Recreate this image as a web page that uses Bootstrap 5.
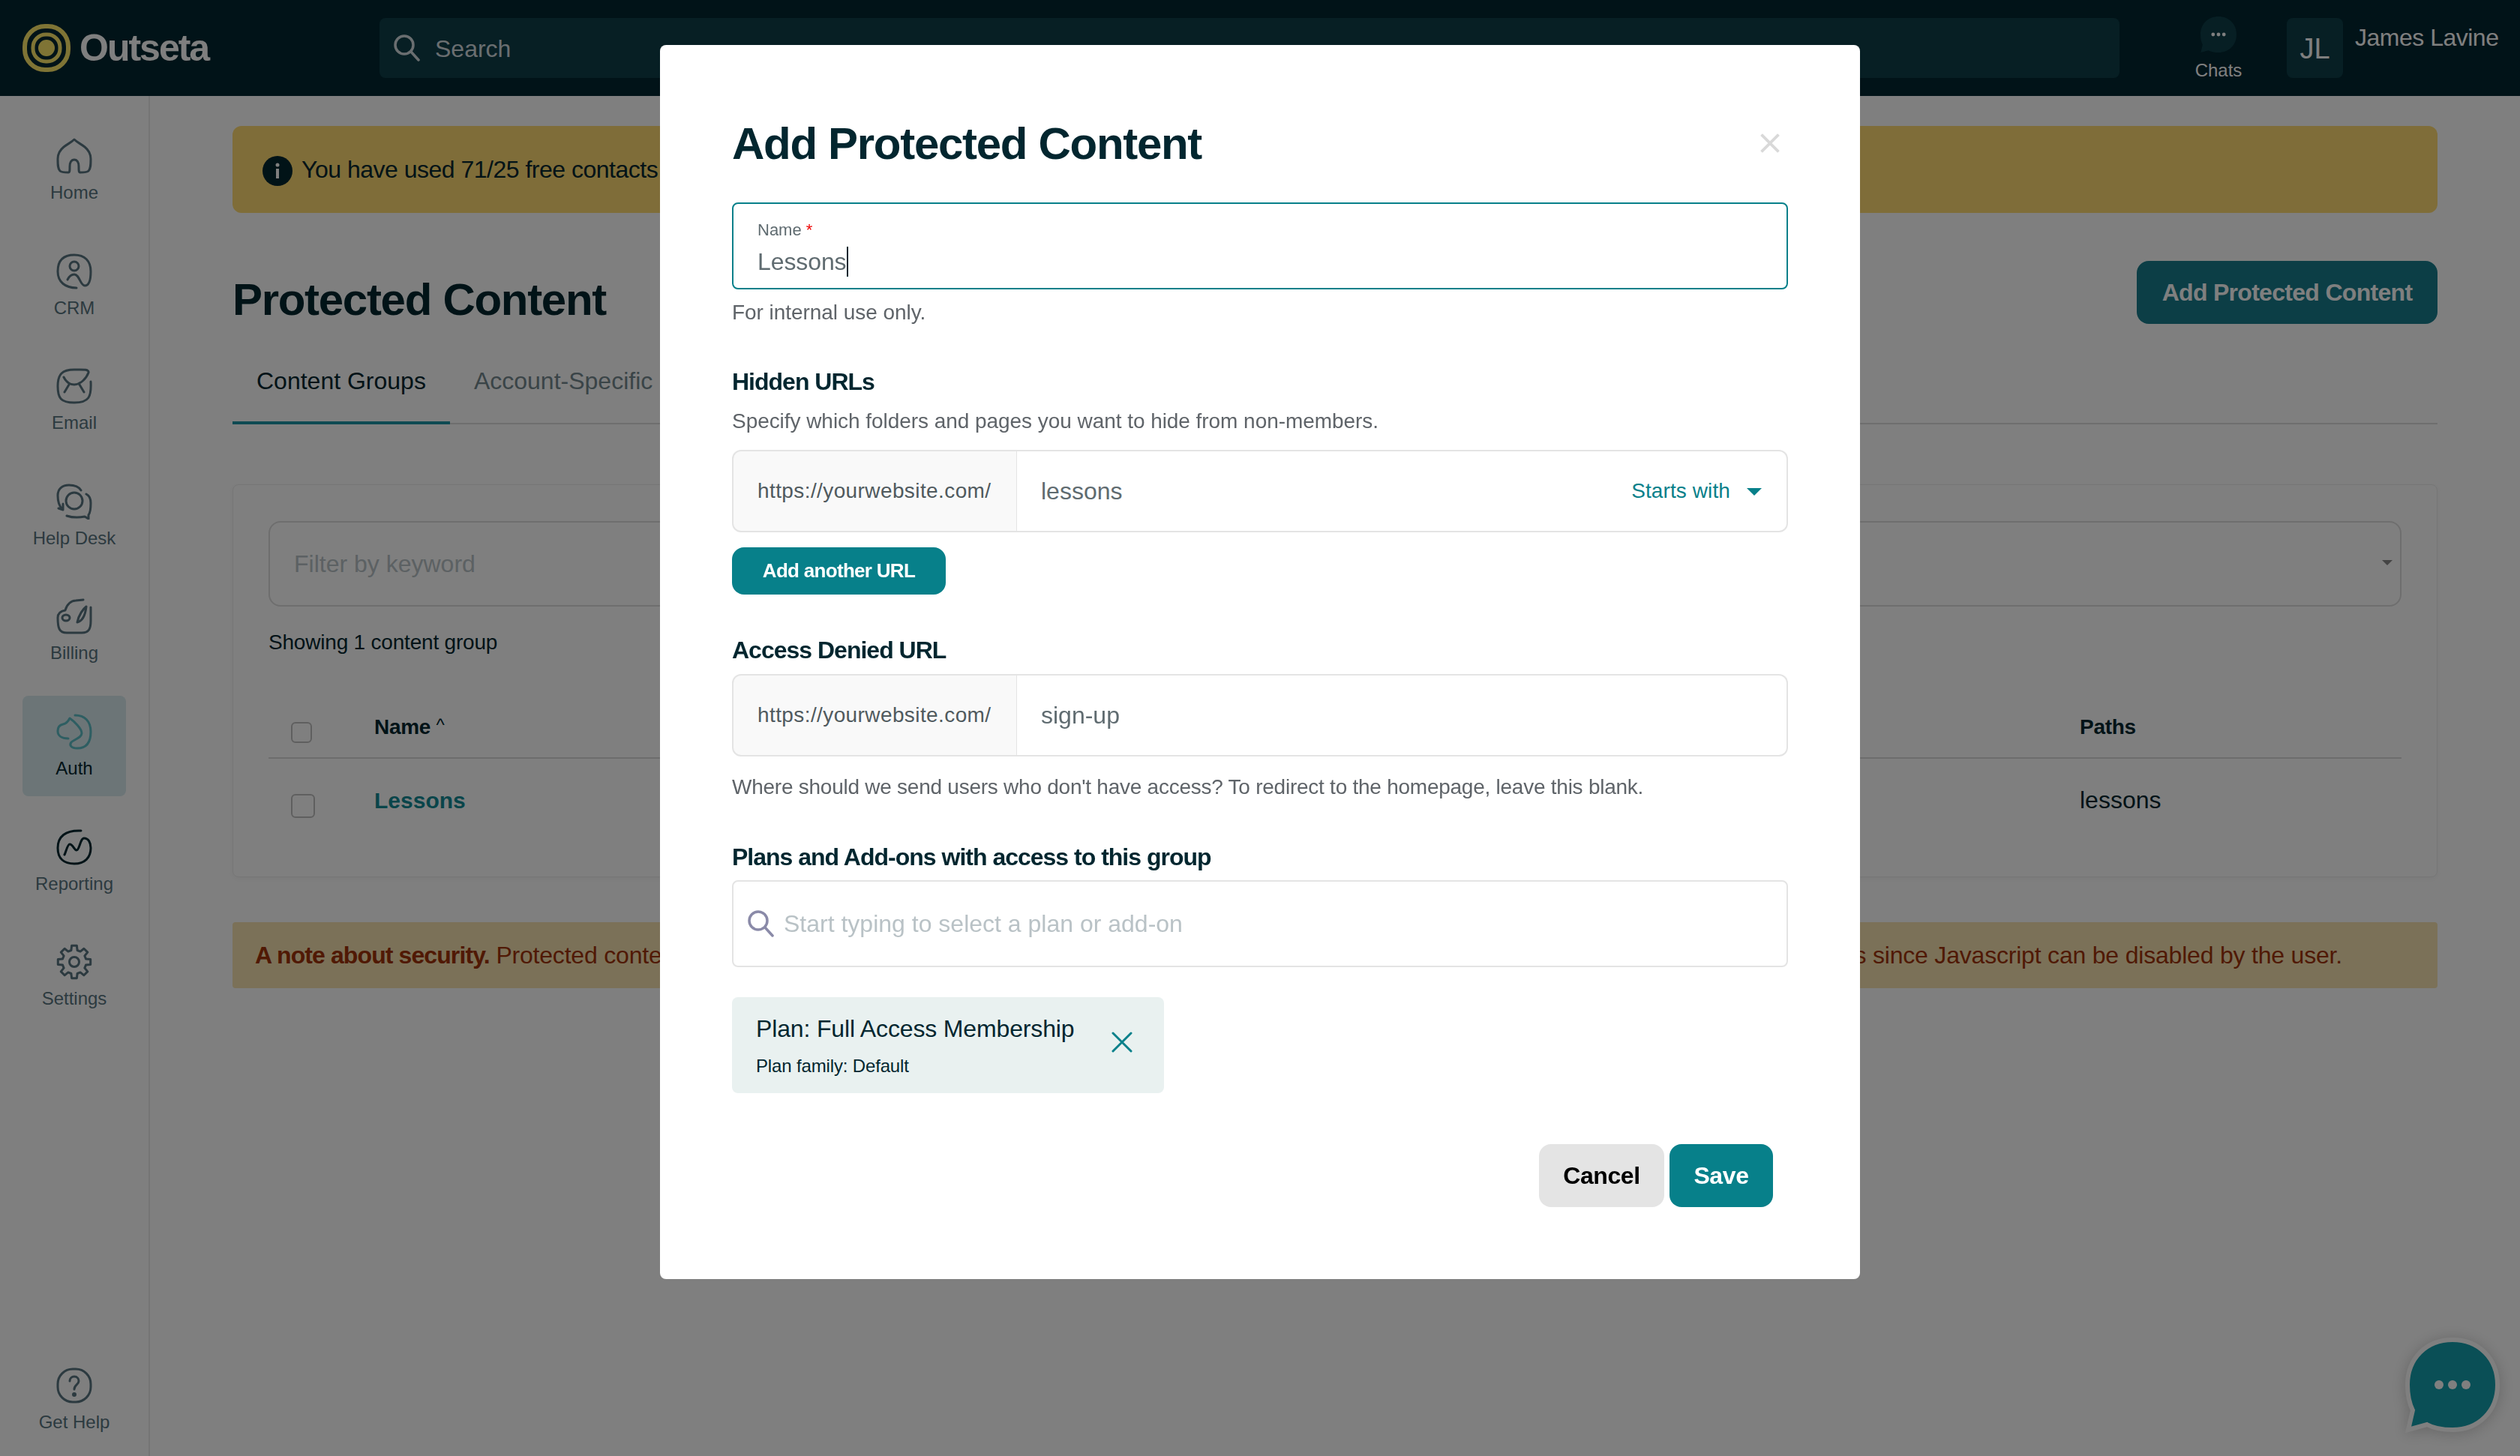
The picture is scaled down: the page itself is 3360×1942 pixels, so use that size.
<!DOCTYPE html>
<html lang="en">
<head>
  <meta charset="UTF-8" />
  <title>Protected Content</title>
  <link href="https://cdn.jsdelivr.net/npm/bootstrap@5.3.0/dist/css/bootstrap.min.css" rel="stylesheet" />
  <style>
    html { font-size: 32px; height: 1942px; overflow: hidden; }
    :root {
      --bs-border-radius: 8px;
      --bs-body-color: #02262f;
      --bs-body-font-family: "Liberation Sans", Arial, sans-serif;
    }
    body { height: 1942px; overflow: hidden; font-family: "Liberation Sans", Arial, sans-serif; color: #02262f; background: #fff; }
    .modal-backdrop.show { opacity: .5; background: #000; }

    /* top bar */
    .top-bar { height: 128px; background: #022630; padding-left: 30px; color: #fff; }
    .brand { width: 476px; font-size: 50px; font-weight: 700; letter-spacing: -2px; }
    .brand svg { width: 64px; height: 64px; margin-right: 12px; }
    .search-box { width: 2320px; height: 80px; background: #0e3e48; border-radius: 8px; padding-left: 18px; color: #d4dde0; }
    .search-box svg { width: 36px; height: 36px; margin-right: 20px; }
    .search-box span { padding-top: 2px; }
    .chats { width: 80px; margin-left: 92px; font-size: 24px; line-height: 28px; padding-top: 2px; }
    .chats svg { width: 48px; height: 48px; display: block; margin-bottom: 10px; }
    .avatar { width: 75px; height: 80px; margin-left: 51px; background: #0e3e48; border-radius: 8px; font-size: 38px; padding-top: 2px; }
    .user-name { margin-left: 16px; margin-top: -28px; white-space: nowrap; letter-spacing: -.5px; }

    /* sidebar */
    .side-nav { width: 200px; height: 1814px; padding: 32px 30px 8px; border-right: 2px solid #ebebeb; flex-shrink: 0; }
    .side-item { display: block; height: 133.6px; margin-bottom: 20px; padding-top: 24px; border-radius: 8px; text-align: center; text-decoration: none; font-size: 24px; line-height: 30px; color: #587480; }
    .side-item:last-child { margin-bottom: 0; }
    .side-item svg { display: block; width: 48px; height: 48px; margin: 0 auto 10px; fill: none; stroke: #587480; stroke-width: 3; stroke-linecap: round; stroke-linejoin: round; }
    .side-item.is-active { background: #d8eaee; color: #02262f; }
    .side-item.is-active svg { stroke: #5cbcc4; }
    .side-item.is-report svg { stroke: #02262f; }

    /* main column */
    .main-col { padding: 40px 110px 0 110px; min-width: 0; }
    .usage-alert { height: 116px; margin: 0; padding: 0 0 0 40px; gap: 12px; border: 0; background: #ffda72; color: #02262f; white-space: nowrap; overflow: hidden; letter-spacing: -.5px; }
    .usage-alert svg { width: 40px; height: 40px; margin-top: 4px; }
    .page-head { height: 84px; margin-top: 64px; }
    .page-title { font-size: 60px; font-weight: 700; line-height: 72px; margin: 20px 0 0; letter-spacing: -1.3px; }
    .btn-head { height: 84px; width: 401px; border-radius: 16px; border: 0; background: #187c8c; color: #fff; font-weight: 700; font-size: 32px; letter-spacing: -.7px; }
    .tabs-row { margin-top: 52px; border-bottom: 2px solid #dcdcdc; }
    .tabs-row .nav-link { padding: 0 32px 30px; line-height: 48px; margin-bottom: -2px; border-bottom: 4px solid transparent; color: #74888f; }
    .tabs-row .nav-link.active { color: #02262f; border-bottom-color: #1c94a4; }

    .groups-card { margin-top: 80px; height: 524px; padding: 48px 47px; border: 1px solid #ededed; box-shadow: 0 2px 8px rgba(0,0,0,.05); }
    .filter-row { height: 114px; }
    .filter-input { flex: 1; border: 2px solid #dcdcdc; border-radius: 16px; padding: 0 32px; }
    .filter-input::placeholder { color: #b8c2c6; }
    .filter-select { width: 1300px; border: 2px solid #dcdcdc; border-radius: 16px; font-size: 25px; text-align: right; padding: 0 10px 0 0; background: #fff; color: #888; }
    .count-line { font-size: 28px; line-height: 42px; margin: 27px 0 51px; letter-spacing: -.2px; }
    .groups-table { table-layout: fixed; margin: 0; --bs-table-bg: transparent; }
    .groups-table th { height: 82px; padding: 0; font-size: 28px; vertical-align: middle; border-bottom: 2px solid #dadada; letter-spacing: -.3px; }
    .groups-table td { height: 110px; padding: 0; vertical-align: middle; border: 0; }
    .groups-table .form-check-input { display: block; margin: 14px 0 0 30px; border: 2px solid #bebebe; border-radius: 6px; }
    .groups-table td .form-check-input { margin-top: 16px; }
    .sort-mark { font-size: 24px; font-weight: 400; vertical-align: 4px; }
    .group-link { color: #128a94; font-size: 30px; font-weight: 700; text-decoration: none; }
    .security-note { height: 88px; margin-top: 60px; padding: 0 127px 0 30px; background: #f6e2b0; color: #a03208; border-radius: 4px; white-space: nowrap; overflow: hidden; letter-spacing: -.2px; }
    .security-note strong { letter-spacing: -.9px; }

    /* floating chat */
    .chat-float { position: fixed; right: 30px; bottom: 35px; width: 120px; height: 120px; z-index: 1000; filter: drop-shadow(0 2px 10px rgba(0,0,0,.2)); overflow: visible; }

    /* modal */
    .modal-dialog.content-modal { max-width: 1600px; width: 1600px; margin: 60px auto 0; }
    .content-modal .modal-content { padding: 96px 96px 96px; border: 0; border-radius: 8px; }
    .content-modal .modal-header { padding: 0; border: 0; }
    .content-modal .modal-title { font-size: 60px; line-height: 72px; font-weight: 700; letter-spacing: -1.3px; }
    .content-modal .btn-close { font-size: 30px; padding: 0; margin: -2px 9px 0 auto; opacity: .15; }
    .name-field { height: 116px; margin-top: 42px; padding: 22px 32px 0; border: 2px solid #07808a; border-radius: 8px; }
    .name-label { display: block; font-size: 22px; line-height: 26px; color: #5f6b70; }
    .name-label span { color: #e00; }
    .name-value { display: inline-block; margin-top: 9px; line-height: 40px; color: #5f6b70; border-right: 2px solid #02262f; letter-spacing: -.1px; }
    .hint { font-size: 28px; line-height: 36px; color: #5f6469; letter-spacing: -.05px; }
    .hint-tight { letter-spacing: -.25px; }
    .sub-head { font-size: 32px; line-height: 40px; font-weight: 700; letter-spacing: -1px; }
    .url-group > * { height: 110px; }
    .url-group .input-group-text { width: 381px; padding: 0 32px; background: #f9f9f9; border: 2px solid #e4e4e4; font-size: 28px; color: #505a5e; letter-spacing: .4px; }
    .url-group .form-control { padding: 0 32px; border: 2px solid #e4e4e4; border-left: 0; color: #5f6b70; box-shadow: none; }
    .url-group .form-control.has-toggle { border-right: 0; }
    .match-toggle { padding: 0 33px 0 0; border: 2px solid #e4e4e4; border-left: 0; background: #fff; color: #07808a; font-size: 28px; letter-spacing: .1px; }
    .match-toggle::after { margin-left: 22px; border-top-width: 10px; border-left-width: 10px; border-right-width: 10px; vertical-align: 3px; }
    .btn-teal { background: #07808a; color: #fff; border: 0; border-radius: 16px; font-weight: 700; }
    .btn-teal:hover { background: #07808a; color: #fff; }
    .btn-add { width: 285px; height: 63px; margin-top: 20px; padding: 0; font-size: 26px; letter-spacing: -.7px; }
    .plan-search { height: 116px; margin-top: 11px; padding-left: 18px; border: 2px solid #e4e4e4; border-radius: 8px; }
    .plan-search svg { width: 36px; height: 36px; flex-shrink: 0; }
    .plan-search .form-control { padding: 0 0 0 13px; border: 0; box-shadow: none; }
    .plan-search .form-control::placeholder { color: #b9c2c6; }
    .plan-chip { width: 576px; height: 128px; margin-top: 40px; padding: 0 42px 0 32px; background: #e9f1f0; border-radius: 8px; }
    .plan-chip svg { width: 28px; height: 28px; margin-top: -8px; }
    .plan-name { line-height: 40px; letter-spacing: -.15px; }
    .plan-family { font-size: 24px; line-height: 30px; margin-top: 15px; letter-spacing: -.15px; }
    .foot-row { margin-top: 68px; padding-right: 20px; gap: 7px; }
    .foot-row .btn { height: 84px; padding: 0; font-size: 32px; font-weight: 700; border: 0; border-radius: 16px; letter-spacing: -.4px; }
    .btn-cancel { width: 167px; background: #e4e4e4; color: #000; }
    .btn-save { width: 138px; }
  </style>
</head>
<body>

  <header class="top-bar d-flex align-items-center">
    <div class="brand d-flex align-items-center">
      <svg viewBox="0 0 64 64" fill="none" stroke="#ffe96a">
        <rect x="3" y="3" width="58" height="58" rx="27" stroke-width="6" />
        <rect x="14" y="14" width="36" height="36" rx="17" stroke-width="5" />
        <circle cx="32" cy="32" r="11" fill="#ffe96a" stroke="none" />
      </svg>
      <span>Outseta</span>
    </div>
    <div class="search-box d-flex align-items-center">
      <svg viewBox="0 0 36 36" fill="none" stroke="#d4dde0" stroke-width="3.5" stroke-linecap="round"><circle cx="15" cy="14" r="12" /><path d="M24 23l10 11" /></svg>
      <span>Search</span>
    </div>
    <div class="chats d-flex flex-column align-items-center">
      <svg viewBox="0 0 120 120"><path fill="#0e3e48" d="M60 0C95 0 120 25 120 60C120 95 95 120 60 120C50 120 35 118 26 113L1 120L7 94C2 84 0 72 0 60C0 25 25 0 60 0Z" /><circle cx="42" cy="60" r="6" fill="#fff" /><circle cx="60" cy="60" r="6" fill="#fff" /><circle cx="78" cy="60" r="6" fill="#fff" /></svg>
      <span>Chats</span>
    </div>
    <div class="avatar d-flex align-items-center justify-content-center">JL</div>
    <div class="user-name">James Lavine</div>
  </header>

  <div class="d-flex">
    <nav class="side-nav d-flex flex-column">
      <a class="side-item" href="#">
        <svg viewBox="0 0 48 48"><path d="M24 2C28 6 33 8 38 12C43 16 46 20 46 28C46 36 46 41 43 44C41 46 36 46 32 46C30 46 30 44 30 38C30 33 28 29 24 29C20 29 18 33 18 38C18 44 18 46 16 46C12 46 7 46 5 44C2 41 2 36 2 28C2 20 5 16 10 12C15 8 20 6 24 2Z" /></svg>
        Home
      </a>
      <a class="side-item" href="#">
        <svg viewBox="0 0 48 48"><path d="M27 46C12 46 2 38 2 24C2 9 10 2 24 2C38 2 46 10 46 24C46 36 44 43 38 43C32 43 31 28 24 28C20 28 17 31 15 35" /><circle cx="24" cy="17" r="6" /></svg>
        CRM
      </a>
      <a class="side-item" href="#">
        <svg viewBox="0 0 48 48"><path d="M46 18C47 38 44 46 24 46C6 46 2 40 2 24C2 8 8 2 24 2C34 2 44 1 43 6C40 14 32 22 24 22C18 22 13 18 10 12M17 22L11 32M31 22L37 32" /></svg>
        Email
      </a>
      <a class="side-item" href="#">
        <svg viewBox="0 0 48 48"><path d="M8 34C4 30 2 24 2 16C2 7 8 2 17 2C24 2 30 4 33 9M9 27L9 35L3 33M14 43C20 45 28 46 38 44L43 47L43 42C46 38 46 32 46 26C46 20 44 16 40 14" /><circle cx="24" cy="23" r="11" /></svg>
        Help Desk
      </a>
      <a class="side-item" href="#">
        <svg viewBox="0 0 48 48"><path d="M2 26C2 20 6 17 12 16C14 8 20 3 26 3L36 2M2 26C2 40 4 46 14 46L34 46C44 46 46 40 46 30L46 12M28 32C30 22 36 14 40 11C39 20 36 30 28 32" /><ellipse cx="13" cy="26" rx="5" ry="4" /></svg>
        Billing
      </a>
      <a class="side-item is-active" href="#">
        <svg viewBox="0 0 48 48"><path d="M25 2C38 2 46 10 46 24C46 38 40 46 28 46C20 46 17 42 20 38C24 34 34 32 34 26C34 20 24 10 18 6C16 10 14 13 9 14C4 15 2 19 2 23C2 29 7 33 16 33" /></svg>
        Auth
      </a>
      <a class="side-item is-report" href="#">
        <svg viewBox="0 0 48 48"><path d="M33 2C12 1 2 10 2 25C2 39 10 46 24 46C38 46 46 38 46 25C46 18 43 12 37 12C32 12 31 28 27 28C24 28 22 20 18 20C15 20 13 30 11 34" /></svg>
        Reporting
      </a>
      <a class="side-item" href="#">
        <svg viewBox="0 0 48 48"><polygon points="19.9,8.5 20.6,2.3 27.4,2.3 28.1,8.5 32.1,10.1 36.9,6.3 41.8,11.1 37.9,15.9 39.5,19.9 45.7,20.6 45.7,27.4 39.5,28.1 37.9,32.1 41.8,36.9 36.9,41.8 32.1,37.9 28.1,39.5 27.4,45.7 20.6,45.7 19.9,39.5 15.9,37.9 11.1,41.8 6.3,36.9 10.1,32.1 8.5,28.1 2.3,27.4 2.3,20.6 8.5,19.9 10.1,15.9 6.3,11.1 11.1,6.3 15.9,10.1" /><circle cx="24" cy="24" r="6.5" /></svg>
        Settings
      </a>
      <a class="side-item mt-auto" href="#">
        <svg viewBox="0 0 48 48"><rect x="2" y="2" width="44" height="44" rx="20" /><path d="M18 18C18 14 21 12 24 12C28 12 30 15 30 18C30 23 24 23 24 29" /><circle cx="24" cy="36" r="1.5" /></svg>
        Get Help
      </a>
    </nav>

    <main class="main-col flex-grow-1">
      <div class="alert usage-alert d-flex align-items-center">
        <svg viewBox="0 0 40 40"><circle cx="20" cy="20" r="20" fill="#02262f" /><circle cx="20" cy="12" r="2.5" fill="#fff" /><rect x="18" y="17" width="4" height="13" fill="#fff" /></svg>
        <span>You have used 71/25 free contacts on your current plan.</span>
      </div>

      <div class="page-head d-flex justify-content-between align-items-center">
        <h1 class="page-title">Protected Content</h1>
        <button type="button" class="btn btn-head">Add Protected Content</button>
      </div>

      <ul class="nav tabs-row">
        <li class="nav-item"><a class="nav-link active" href="#">Content Groups</a></li>
        <li class="nav-item"><a class="nav-link" href="#">Account-Specific Content</a></li>
      </ul>

      <div class="card groups-card">
        <div class="filter-row d-flex gap-2">
          <input type="text" class="form-control filter-input" placeholder="Filter by keyword" />
          <button type="button" class="btn dropdown-toggle filter-select"></button>
        </div>
        <div class="count-line">Showing 1 content group</div>
        <table class="table groups-table">
          <colgroup><col style="width: 141px" /><col /><col style="width: 429px" /></colgroup>
          <thead>
            <tr>
              <th><input class="form-check-input" type="checkbox" /></th>
              <th>Name <span class="sort-mark">^</span></th>
              <th>Paths</th>
            </tr>
          </thead>
          <tbody>
            <tr>
              <td><input class="form-check-input" type="checkbox" /></td>
              <td><a class="group-link" href="#">Lessons</a></td>
              <td>lessons</td>
            </tr>
          </tbody>
        </table>
      </div>

      <div class="security-note d-flex align-items-center justify-content-between">
        <span><strong>A note about security.</strong> Protected content</span>
        <span>is not for sensitive materials since Javascript can be disabled by the user.</span>
      </div>
    </main>
  </div>

  <svg class="chat-float" viewBox="0 0 120 120"><path fill="#149eac" stroke="#fff" stroke-width="6" d="M60 0C95 0 120 25 120 60C120 95 95 120 60 120C50 120 35 118 26 113L1 120L7 94C2 84 0 72 0 60C0 25 25 0 60 0Z" /><circle cx="42" cy="60" r="6" fill="#fff" /><circle cx="60" cy="60" r="6" fill="#fff" /><circle cx="78" cy="60" r="6" fill="#fff" /></svg>

  <div class="modal-backdrop show"></div>

  <div class="modal d-block" tabindex="-1">
    <div class="modal-dialog content-modal">
      <div class="modal-content">
        <div class="modal-header">
          <h2 class="modal-title">Add Protected Content</h2>
          <button type="button" class="btn-close" aria-label="Close"></button>
        </div>

        <div class="name-field">
          <label class="name-label">Name <span>*</span></label>
          <span class="name-value">Lessons</span>
        </div>
        <div class="hint" style="margin-top: 13px">For internal use only.</div>

        <div class="sub-head" style="margin-top: 54px">Hidden URLs</div>
        <div class="hint" style="margin-top: 15px">Specify which folders and pages you want to hide from non-members.</div>
        <div class="input-group url-group" style="margin-top: 20px">
          <span class="input-group-text">https://yourwebsite.com/</span>
          <input type="text" class="form-control has-toggle" value="lessons" />
          <button type="button" class="btn dropdown-toggle match-toggle">Starts with</button>
        </div>
        <div><button type="button" class="btn btn-teal btn-add">Add another URL</button></div>

        <div class="sub-head" style="margin-top: 54px">Access Denied URL</div>
        <div class="input-group url-group" style="margin-top: 12px">
          <span class="input-group-text">https://yourwebsite.com/</span>
          <input type="text" class="form-control" value="sign-up" />
        </div>
        <div class="hint hint-tight" style="margin-top: 23px">Where should we send users who don't have access? To redirect to the homepage, leave this blank.</div>

        <div class="sub-head" style="margin-top: 55px">Plans and Add-ons with access to this group</div>
        <div class="plan-search d-flex align-items-center">
          <svg viewBox="0 0 36 36" fill="none" stroke="#8a8aa8" stroke-width="3.5" stroke-linecap="round"><circle cx="15" cy="14" r="12" /><path d="M24 23l10 11" /></svg>
          <input type="text" class="form-control" placeholder="Start typing to select a plan or add-on" />
        </div>

        <div class="plan-chip d-flex justify-content-between align-items-center">
          <div>
            <div class="plan-name">Plan: Full Access Membership</div>
            <div class="plan-family">Plan family: Default</div>
          </div>
          <svg viewBox="0 0 28 28" fill="none" stroke="#07808a" stroke-width="3" stroke-linecap="round"><path d="M2 2l24 24M26 2L2 26" /></svg>
        </div>

        <div class="foot-row d-flex justify-content-end">
          <button type="button" class="btn btn-cancel">Cancel</button>
          <button type="button" class="btn btn-teal btn-save">Save</button>
        </div>
      </div>
    </div>
  </div>

  <script src="https://cdn.jsdelivr.net/npm/bootstrap@5.3.0/dist/js/bootstrap.bundle.min.js"></script>
</body>
</html>
